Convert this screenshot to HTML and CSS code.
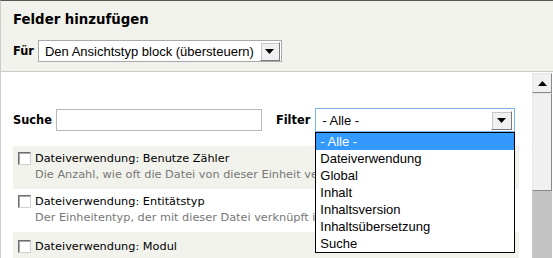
FILE: index.html
```html
<!DOCTYPE html>
<html lang="de">
<head>
    <meta charset="UTF-8">
    <title>Felder hinzufügen</title>
    <link rel="stylesheet" href="styles.css">
</head>
<body>
    <div class="panel">
        <div class="head">
            <h2 class="title">Felder hinzufügen</h2>
            <div class="for-row">
                <span class="lbl">Für</span>
                <div class="sel sel-for">
                    <span>Den Ansichtstyp block (übersteuern)</span>
                    <span class="arrow-btn"><svg width="9" height="5" viewBox="0 0 9 5"><path d="M0 0h9L4.5 5z" fill="#000"/></svg></span>
                </div>
            </div>
        </div>

        <div class="body">
            <div class="main">
                <div class="filters">
                    <span class="lbl">Suche</span>
                    <div class="input"></div>
                    <span class="lbl lbl-filter">Filter</span>
                    <div class="sel sel-filter">
                        <span>- Alle -</span>
                        <span class="arrow-btn"><svg width="9" height="5" viewBox="0 0 9 5"><path d="M0 0h9L4.5 5z" fill="#000"/></svg></span>
                        <ul class="dropdown">
                            <li class="active">- Alle -</li>
                            <li>Dateiverwendung</li>
                            <li>Global</li>
                            <li>Inhalt</li>
                            <li>Inhaltsversion</li>
                            <li>Inhaltsübersetzung</li>
                            <li>Suche</li>
                        </ul>
                    </div>
                </div>

                <div class="rows">
                    <div class="row odd">
                        <span class="check"></span>
                        <div class="text">
                            <div class="name">Dateiverwendung: Benutze Zähler</div>
                            <div class="desc">Die Anzahl, wie oft die Datei von dieser Einheit verwendet wird.</div>
                        </div>
                    </div>
                    <div class="row">
                        <span class="check"></span>
                        <div class="text">
                            <div class="name">Dateiverwendung: Entitätstyp</div>
                            <div class="desc">Der Einheitentyp, der mit dieser Datei verknüpft ist.</div>
                        </div>
                    </div>
                    <div class="row odd">
                        <span class="check"></span>
                        <div class="text">
                            <div class="name">Dateiverwendung: Modul</div>
                        </div>
                    </div>
                </div>
            </div>

            <div class="scrollbar">
                <div class="sb-btn"><svg width="9" height="5" viewBox="0 0 9 5"><path d="M0 5h9L4.5 0z" fill="#000"/></svg></div>
                <div class="sb-thumb"></div>
                <div class="sb-track"></div>
            </div>
        </div>
    </div>
</body>
</html>
```

FILE: styles.css
```css
* {
    box-sizing: border-box;
}
body {
    margin: 0;
    width: 553px;
    height: 258px;
    overflow: hidden;
    background: #fff;
    font-family: "DejaVu Sans", Verdana, sans-serif;
    color: #000;
}
.panel {
    height: 258px;
    border-top: 1px solid #555;
    border-left: 1px solid #ccc;
    display: flex;
    flex-direction: column;
}
.head {
    height: 71px;
    background: #f2f2ec;
    border-bottom: 1px solid #ccc;
    padding: 11px 0 0 12px;
}
.title {
    margin: 0;
    font-size: 13.3px;
    line-height: 16px;
    font-weight: bold;
}
.lbl {
    font-size: 11.4px;
    font-weight: bold;
}
.for-row {
    display: flex;
    align-items: center;
    gap: 4px;
    margin-top: 12px;
}
.sel {
    position: relative;
    display: flex;
    align-items: center;
    background: #fff;
    font-family: "Liberation Sans", Arial, sans-serif;
    font-size: 13px;
    padding-left: 6px;
}
.sel-for {
    width: 244px;
    height: 22px;
    border: 1px solid #a9a9a9;
}
.arrow-btn {
    margin-left: auto;
    width: 20px;
    height: 19px;
    display: flex;
    align-items: center;
    justify-content: center;
    background: #f0f0f0;
    border: 1px solid;
    border-color: #fff #7a7a7a #7a7a7a #fff;
    box-shadow: 1px 1px 0 #c8c8c8 inset;
}
.sel-for .arrow-btn {
    margin-right: 1px;
}
.body {
    flex: 1;
    display: flex;
    min-height: 0;
}
.main {
    flex: 1;
    padding: 36px 0 0 12px;
    overflow: hidden;
}
.filters {
    display: flex;
    align-items: center;
}
.input {
    width: 206px;
    height: 22px;
    margin-left: 4px;
    border: 1px solid #b8b8b8;
    background: #fff;
}
.lbl-filter {
    margin-left: 14px;
    margin-right: 5px;
}
.sel-filter {
    width: 200px;
    height: 24px;
    border: 1px solid #7eb4ea;
}
.sel-filter .arrow-btn {
    width: 21px;
    margin-right: 2px;
}
.dropdown {
    position: absolute;
    left: -1px;
    top: 23px;
    width: 200px;
    margin: 0;
    padding: 0;
    list-style: none;
    background: #fff;
    border: 1px solid #000;
    z-index: 2;
}
.dropdown li {
    height: 17px;
    line-height: 17px;
    padding-left: 4px;
}
.dropdown li.active {
    background: #3399ff;
    color: #fff;
}
.rows {
    width: 506px;
    margin-top: 14px;
}
.row {
    display: flex;
    align-items: flex-start;
    height: 43px;
    padding: 4px 0 0 5px;
    font-size: 11.3px;
    overflow: hidden;
}
.row:last-child {
    padding-top: 6px;
}
.row.odd {
    background: #f2f2ec;
}
.check {
    flex: none;
    width: 13px;
    height: 13px;
    margin-top: 2px;
    background: #fff;
    border: 1px solid;
    border-color: #6e6e6e #d0d0d0 #d0d0d0 #6e6e6e;
    box-shadow: 1px 1px 0 #a8a8a8 inset;
}
.text {
    margin-left: 4px;
    white-space: nowrap;
}
.name {
    line-height: 18px;
}
.desc {
    line-height: 14px;
    color: #777;
}
.scrollbar {
    width: 20px;
    margin-right: 1px;
    padding-top: 1px;
    display: flex;
    flex-direction: column;
}
.sb-btn, .sb-thumb {
    background: #f0f0f0;
    border: 1px solid;
    border-color: #e6e6e6 #8a8a8a #8a8a8a #e6e6e6;
}
.sb-btn {
    height: 20px;
    display: flex;
    align-items: center;
    justify-content: center;
}
.sb-thumb {
    height: 98px;
}
.sb-track {
    flex: 1;
    background: #c3c3c3;
}
```
